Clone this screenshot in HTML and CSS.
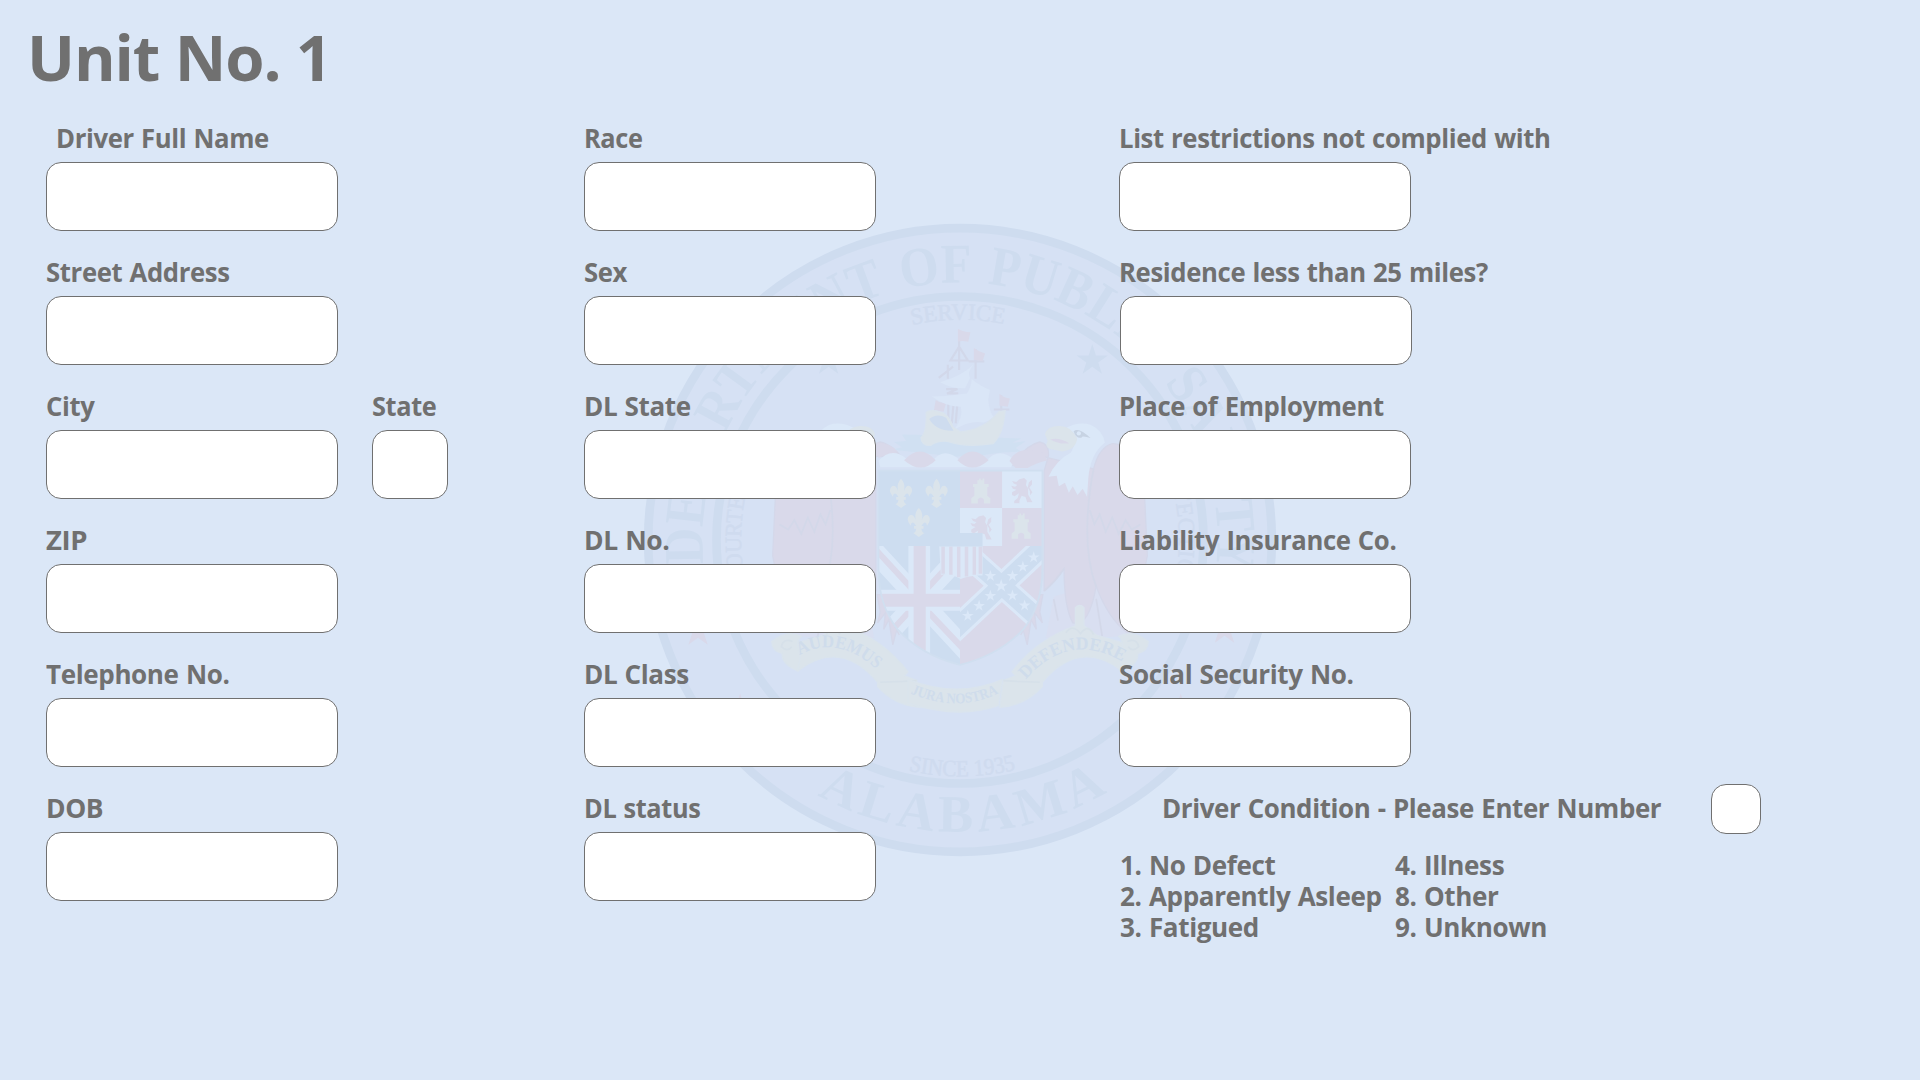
FILE: index.html
```
<!DOCTYPE html>
<html lang="en">
<head>
<meta charset="utf-8">
<title>Unit No. 1</title>
<link rel="stylesheet" href="styles.css">
</head>
<body>
<svg class="seal" viewBox="0 0 1568 1568" aria-hidden="true">
  <defs>
    <path id="arc-top" d="M784 1378A594 594 0 0 1 784 190A594 594 0 0 1 784 1378"/>
    <path id="arc-bottom" d="M111 784A673 673 0 0 0 1457 784"/>
    <path id="arc-service" d="M276 784A508 508 0 0 1 1292 784"/>
    <path id="arc-side" d="M784 1289A505 505 0 0 1 784 279A505 505 0 0 1 784 1289"/>
    <path id="arc-since" d="M239 784A545 545 0 0 0 1329 784"/>
    <path id="rib-left" d="M414 1050Q500 1000 596 1086"/>
    <path id="rib-right" d="M936 1106Q1032 994 1156 1063"/>
    <path id="rib-mid" d="M666 1136Q780 1186 880 1134"/>
    <path id="star" d="M0-38L8.500-11.700H36.100L13.800 4.500L22.300 30.700L0 14.500L-22.300 30.700L-13.800 4.500L-36.100-11.700H-8.500Z"/>
    <path id="lis" d="M0-33Q11-22 7-5Q12-20 21-16Q31-8 19 8Q17-3 10 3L6 9H11V15H6Q7 24 13 25L0 34L-13 25Q-7 24-6 15H-11V9H-6L-10 3Q-17-3-19 8Q-31-8-21-16Q-12-20-7-5Q-11-22 0-33Z"/>
    <path id="castle" d="M-22 28V16L-15 10V-10H-18V-17H-8V-26H-4V-30H0V-26H4V-30H8V-17H18V-10H15V10L22 16V28H7V18Q0 10-7 18V28Z"/>
    <path id="lion" d="M-5-27L6-30L12-24L10-14L15-5V8L22 20L25 26H13L9 14L0 11L-5 22V28H-17V23L-9 16L-6 5L-16 12L-22 9V3L-12-3L-20-5L-24-12L-15-10L-10-14L-18-17L-22-23L-12-21ZM17-20L24-26V-15L18-8L25 3L20 10L19 0L14-8Z"/>
    <clipPath id="shield"><path d="M596 624H974V850Q974 935 930 990Q875 1049 784 1072Q693 1049 640 990Q596 935 596 850Z"/></clipPath>
    <clipPath id="jack"><path d="M596 798H784V1072H596Z"/></clipPath>
    <clipPath id="cross"><path d="M784 798H974V1072H784Z"/></clipPath>
    <g id="eagle">
      <path class="blush" d="M1000 915L982 1010L1090 1010L1180 1005L1200 850Z"/>
      <path class="red edge" d="M970 590Q925 600 905 612Q935 565 968 558Q990 562 988 590L978 625V900Q1004 880 1024 850Q1024 940 1044 975Q1082 985 1098 890Q1125 965 1172 1000L1200 900L1216 820L1210 690L1198 595Q1165 560 1135 562Q1105 570 1092 620Z"/>
      <path class="line" d="M1092 620Q1060 790 1098 892M1083 715L1094 748L1106 725L1120 765L1135 732L1150 770L1166 738L1180 760L1200 748M1000 920L1010 970M1098 920L1112 1006M1024 850Q1002 882 978 902"/>
      <path class="white" d="M1025 528Q1055 510 1085 518Q1115 532 1118 560Q1085 585 1080 640L1077 684L1067 666L1055 680L1044 660L1035 675L1026 652L1012 660L1007 636L988 638Q1005 600 1040 582L1054 550Q1048 532 1025 528Z"/>
      <path class="yellow" d="M980 540Q985 520 1015 521Q1042 522 1054 550Q1052 575 1020 580L992 574Q978 570 986 555Z"/>
      <path class="red" d="M992 552Q1012 546 1036 561Q1012 564 992 552Z"/>
      <path class="ink" d="M1046 533Q1058 523 1085 549Q1065 542 1064 548Q1051 550 1046 533Z"/>
      <circle class="white" cx="1058" cy="538" r="5"/>
      <path class="red edge" d="M975 910L968 950L974 975L956 952L960 990L948 968L939 1026L930 992L924 1003Q950 950 955 910Z"/>
    </g>
    <g id="ribbon">
      <path class="yellow edge-y" d="M1050 940Q1060 930 1070 940V982L1100 1004L1190 1030L1158 1086Q1060 1010 974 1112L974 1122Q936 1165 876 1170L884 1108L912 1097L904 1088Q960 1014 1050 982Z"/>
      <path class="yellow edge-y" d="M1158 1086L1152 1050Q1166 1018 1150 1006Q1182 990 1218 1018Q1218 1040 1194 1046Q1196 1070 1158 1086Z"/>
      <path class="line-y" d="M1170 1018Q1192 1010 1196 1030Q1182 1044 1172 1030M1028 998Q1044 976 1062 1000Q1080 976 1092 1002M884 1108L914 1110L968 1112"/>
    </g>
  </defs>

  <circle class="disc" cx="784" cy="784" r="719"/>
  <circle class="ring" cx="784" cy="784" r="719"/>
  <circle class="ring" cx="784" cy="784" r="561.500"/>

  <g class="seal-text">
    <text class="wide-words" font-size="129"><textPath href="#arc-top" startOffset="50.200%" text-anchor="middle" textLength="1990" lengthAdjust="spacingAndGlyphs">DEPARTMENT OF PUBLIC SAFETY</textPath></text>
    <text font-size="122"><textPath href="#arc-bottom" startOffset="50.300%" text-anchor="middle" textLength="700" lengthAdjust="spacing">ALABAMA</textPath></text>
  </g>
  <g class="seal-text faint">
    <text font-size="54"><textPath href="#arc-service" startOffset="49.700%" text-anchor="middle" textLength="214" lengthAdjust="spacingAndGlyphs">SERVICE</textPath></text>
    <text font-size="54"><textPath href="#arc-side" startOffset="26%" text-anchor="middle" textLength="260" lengthAdjust="spacingAndGlyphs">COURTESY</textPath></text>
    <text font-size="54"><textPath href="#arc-side" startOffset="73.300%" text-anchor="middle" textLength="350" lengthAdjust="spacing">PROTECTION</textPath></text>
    <text font-size="54"><textPath href="#arc-since" startOffset="50.300%" text-anchor="middle" textLength="250" lengthAdjust="spacingAndGlyphs">SINCE 1935</textPath></text>
  </g>

  <use class="ringfill" href="#star" x="1089" y="370"/>
  <use class="ringfill" href="#star" x="481" y="370"/>
  <g class="red">
    <use href="#star" x="180" y="995"/>
    <use href="#star" x="1394" y="990"/>
    <use href="#star" x="277" y="1176"/>
    <use href="#star" x="1293" y="1176"/>
  </g>

  <use href="#eagle"/>
  <use href="#eagle" transform="matrix(-1 0 0 1 1568 0)"/>
  <use href="#ribbon"/>
  <use href="#ribbon" transform="matrix(-1 0 0 1 1568 0)"/>
  <path class="yellow edge-y" d="M664 1106Q780 1150 881 1106L872 1166Q780 1198 664 1160Z"/>
  <g class="motto">
    <text font-size="42"><textPath href="#rib-left" textLength="194" lengthAdjust="spacingAndGlyphs">AUDEMUS</textPath></text>
    <text font-size="42"><textPath href="#rib-right" textLength="250" lengthAdjust="spacingAndGlyphs">DEFENDERE</textPath></text>
    <text font-size="34"><textPath href="#rib-mid" startOffset="4" textLength="210" lengthAdjust="spacingAndGlyphs">JURA NOSTRA</textPath></text>
  </g>

  <!-- Ship crest -->
  <path class="sea" d="M626 576L650 570L632 558L660 556L650 541L700 542L880 548L925 550L905 560L936 556L912 572L925 580L880 582L840 588L770 592L690 582Z"/>
  <path class="mast" d="M782 300V392M782 338L762 370H802L782 338M820 344V412M804 372H840M756 380V412M735 410L768 384M752 436H778L754 446H780M757 460V515M770 460L765 515M778 470L774 515M879 450V504M862 483H898"/>
  <path class="red" d="M779 297Q792 305 808 305L803 327Q792 324 779 326ZM816 341Q828 350 842 354L836 371L816 369ZM875 447Q885 456 899 458L894 477L875 474ZM728 461Q740 470 752 468L746 488L724 484Z"/>
  <path class="white sail" d="M815 380Q800 396 807 411L796 434Q768 436 738 420Q785 408 815 380Z"/>
  <path class="white sail" d="M811 413Q828 428 853 438L849 461Q852 488 861 500Q850 512 838 513Q804 508 771 530Q792 500 786 477Q750 476 719 453Q760 452 800 446Q810 432 811 413Z"/>
  <path class="yellow edge-y" d="M706 490Q715 482 738 489Q758 492 768 524L785 535Q840 530 874 488L888 486Q884 540 860 562Q800 570 768 560Q740 550 716 566Q695 566 694 548Q708 535 706 490Z"/>
  <path class="ringfill" d="M713 505Q730 490 752 502L769 532Q730 534 713 505Z"/>

  <!-- Torse -->
  <path class="white" d="M596 602Q625 568 660 596Q690 570 722 600Q748 568 784 600Q815 570 846 600Q875 568 910 600L902 616H600Z"/>
  <path class="red" d="M594 560Q625 562 640 580Q615 580 596 596ZM655 600Q692 560 728 600Q694 634 655 600ZM778 600Q812 560 850 600Q812 634 778 600ZM898 602Q915 565 975 582L986 600Q960 606 940 618H912Z"/>

  <!-- Shield -->
  <g clip-path="url(#shield)">
    <path class="blue" d="M590 615H784V1080H590Z"/>
    <path class="red" d="M784 615H980V1080H784Z"/>
    <path class="white" d="M881 622H980V710H881ZM784 710H881V798H784Z"/>
    <g clip-path="url(#jack)">
      <path d="M570 792L810 1052M810 792L570 1052" stroke="#dbe8f8" stroke-width="46"/>
      <path d="M570 785L690 915M815 1060L690 928M680 935L570 1054M700 905L810 785" stroke="#d9d9ea" stroke-width="14"/>
      <path class="white" d="M665 798H715V1080H665ZM590 899H784V947H590Z"/>
      <path class="red" d="M677 798H705V1080H677ZM590 908H784V938H590Z"/>
    </g>
    <g clip-path="url(#cross)">
      <path d="M760 1002L1000 776M770 790L990 988" stroke="#dbe8f8" stroke-width="56"/>
      <path d="M760 1002L1000 776M770 790L990 988" stroke="#cdddf0" stroke-width="42"/>
    </g>
  </g>
  <path d="M596 624H974V850Q974 935 930 990Q875 1049 784 1072Q693 1049 640 990Q596 935 596 850Z" fill="none" stroke="#d0dff0" stroke-width="4"/>
  <g class="yellow">
    <use href="#lis" x="648" y="676"/>
    <use href="#lis" x="730" y="676"/>
    <use href="#lis" x="689" y="743"/>
    <use href="#castle" x="832" y="672"/>
    <use href="#castle" x="925" y="753"/>
  </g>
  <g class="red">
    <use href="#lion" x="926" y="671"/>
    <use href="#lion" x="832" y="757"/>
  </g>
  <g class="white">
    <use href="#star" transform="translate(954 824) scale(.37)"/>
    <use href="#star" transform="translate(929 846) scale(.37)"/>
    <use href="#star" transform="translate(905 867) scale(.37)"/>
    <use href="#star" transform="translate(854 867) scale(.37)"/>
    <use href="#star" transform="translate(879 890) scale(.42)"/>
    <use href="#star" transform="translate(854 913) scale(.37)"/>
    <use href="#star" transform="translate(828 936) scale(.37)"/>
    <use href="#star" transform="translate(802 959) scale(.37)"/>
    <use href="#star" transform="translate(905 912) scale(.37)"/>
    <use href="#star" transform="translate(933 935) scale(.37)"/>
  </g>
  <path class="white" d="M736 798H836V866Q805 865 786 874Q764 862 740 864Z"/>
  <path d="M745 799V862M763 799V864M781 799V870M799 799V868M817 799V864M831 799V862" stroke="#d9d9ea" stroke-width="8"/>
  <path class="blue" d="M736 768H836V799H736Z"/>
</svg>

<main class="page">
  <h1 class="title">Unit No. 1</h1>
  <form class="columns">
    <section class="column">
      <label class="field"><span class="label indent">Driver Full Name</span><input class="box"></label>
      <label class="field"><span class="label">Street Address</span><input class="box"></label>
      <div class="pair">
        <label class="field"><span class="label">City</span><input class="box"></label>
        <label class="field"><span class="label tight">State</span><input class="box state"></label>
      </div>
      <label class="field"><span class="label full">ZIP</span><input class="box"></label>
      <label class="field"><span class="label loose">Telephone No.</span><input class="box"></label>
      <label class="field"><span class="label wide">DOB</span><input class="box"></label>
    </section>
    <section class="column">
      <label class="field"><span class="label tight">Race</span><input class="box"></label>
      <label class="field"><span class="label">Sex</span><input class="box"></label>
      <label class="field"><span class="label loose">DL State</span><input class="box"></label>
      <label class="field"><span class="label wide">DL No.</span><input class="box"></label>
      <label class="field"><span class="label loose">DL Class</span><input class="box"></label>
      <label class="field"><span class="label tight">DL status</span><input class="box"></label>
    </section>
    <section class="column">
      <label class="field"><span class="label">List restrictions not complied with</span><input class="box"></label>
      <label class="field"><span class="label">Residence less than 25 miles?</span><input class="box nudge"></label>
      <label class="field"><span class="label">Place of Employment</span><input class="box"></label>
      <label class="field"><span class="label">Liability Insurance Co.</span><input class="box"></label>
      <label class="field"><span class="label loose">Social Security No.</span><input class="box"></label>
      <div class="condition">
        <label class="condition-row"><span class="label question">Driver Condition - Please Enter Number</span><input class="box code"></label>
        <div class="codes">
          <div class="code-list"><span>1. No Defect</span><span>2. Apparently Asleep</span><span>3. Fatigued</span></div>
          <div class="code-list"><span>4. Illness</span><span>8. Other</span><span>9. Unknown</span></div>
        </div>
      </div>
    </section>
  </form>
</main>
</body>
</html>
```
FILE: styles.css
```
* { box-sizing: border-box; }

body {
  margin: 0;
  width: 1920px;
  height: 1080px;
  overflow: hidden;
  background: #dbe7f7;
  color: #707070;
  font-family: "Open Sans", "Noto Sans", sans-serif;
  font-weight: 700;
}

/* Watermark behind the form */
.seal {
  position: absolute;
  left: 620px;
  top: 200px;
  width: 680px;
  height: 680px;
}
.disc { fill: #d6e1f4; }
.ring { fill: none; stroke: #cedcef; stroke-width: 20; }
.ringfill { fill: #cedcef; }
.seal-text {
  font-family: "Liberation Serif", serif;
  font-weight: 700;
  fill: #cedcef;
}
.wide-words { word-spacing: 12px; }
.faint { font-weight: 400; fill: #cfdbef; stroke: #cfdbef; stroke-width: 1; }
.motto {
  font-family: "Liberation Serif", serif;
  font-weight: 700;
  fill: #cfdceb;
}
.red { fill: #d9d9ea; }
.blush { fill: #d9dff1; }
.blue { fill: #cdddf0; }
.white { fill: #dbe8f8; }
.white.sail { fill: #dae6f7; }
.yellow { fill: #dbe4eb; }
.sea { fill: #d0e0f2; }
.ink { fill: #c7d3e3; }
.edge { stroke: #d4d8ea; stroke-width: 3; }
.edge-y { stroke: #dae4ed; stroke-width: 3; }
.line { fill: none; stroke: #d3d8e9; stroke-width: 4; }
.line-y { fill: none; stroke: #d6e0e9; stroke-width: 4; }
.mast { fill: none; stroke: #d2d8ea; stroke-width: 5; }

.page {
  position: relative;
  display: flex;
  flex-direction: column;
  padding: 12px 0 0 46px;
}
.title {
  margin: 0 0 13px -19px;
  height: 96px;
  font-size: 63.5px;
  line-height: 90px;
  letter-spacing: -1.1px;
}
.columns {
  display: grid;
  grid-template-columns: 538px 535px 1fr;
}
.column {
  display: flex;
  flex-direction: column;
  gap: 24px;
}
.field {
  display: flex;
  flex-direction: column;
  gap: 7px;
}
.pair {
  display: flex;
  gap: 34px;
}

/* Labels are set slightly condensed, anchored at their left edge */
.label,
.code-list span {
  align-self: flex-start;
  font-size: 27.5px;
  letter-spacing: -0.4px;
  word-spacing: 1px;
  white-space: nowrap;
  transform: scaleX(0.935);
  transform-origin: 0 50%;
}
.label { line-height: 34px; }
.label.tight { transform: scaleX(0.922); }
.label.loose { transform: scaleX(0.947); }
.label.wide { transform: scaleX(0.962); }
.label.full { transform: none; }
.indent { margin-left: 10px; }
.box {
  display: block;
  width: 292px;
  height: 69px;
  margin: 0;
  padding: 0 16px;
  border: 1px solid #707070;
  border-radius: 15px;
  background: #fff;
  color: inherit;
  font: inherit;
  font-size: 27.5px;
  outline: none;
}
.box.state { width: 76px; }
.box.nudge { margin-left: 1px; }
.box.code { width: 50px; height: 50px; }

.condition {
  display: flex;
  flex-direction: column;
  gap: 15px;
  margin-top: -7px;
}
.condition-row {
  display: flex;
  justify-content: space-between;
  width: 642px;
  padding-left: 43px;
}
.label.question {
  padding-top: 7px;
  transform: scaleX(0.942);
}
.codes {
  display: grid;
  grid-template-columns: 275px 1fr;
  padding-left: 1px;
  line-height: 31px;
}
.code-list {
  display: flex;
  flex-direction: column;
}
.code-list span { transform: scaleX(0.948); }
```
